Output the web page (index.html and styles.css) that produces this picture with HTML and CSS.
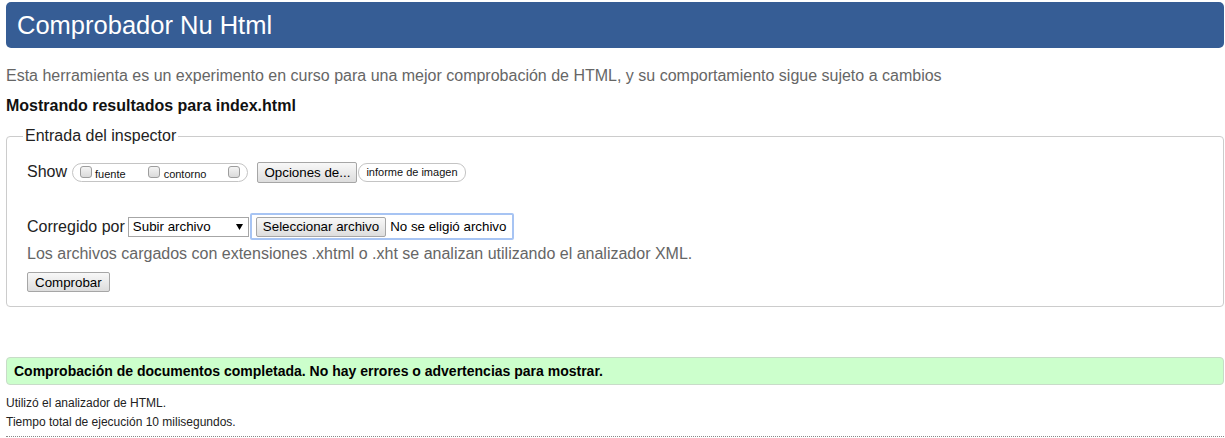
FILE: index.html
```html
<!DOCTYPE html>
<html lang="es">
<head>
<meta charset="utf-8">
<title>Comprobador Nu Html</title>
<link rel="stylesheet" href="styles.css">
</head>
<body>
<header class="banner"><h1 class="banner-title">Comprobador Nu Html</h1></header>
<p class="intro">Esta herramienta es un experimento en curso para una mejor comprobación de HTML, y su comportamiento sigue sujeto a cambios</p>
<h2 class="showing">Mostrando resultados para index.html</h2>
<fieldset class="inspector">
  <legend class="inspector-legend">Entrada del inspector</legend>
  <div class="row show-row">
    <span class="lbl">Show</span>
    <span class="group">
      <span class="opt"><span class="cb"></span><span class="opt-text">fuente</span></span>
      <span class="opt opt-wide"><span class="cb"></span><span class="opt-text">contorno</span></span>
      <span class="opt opt-last"><span class="cb"></span></span>
    </span>
    <span class="btn btn-options">Opciones de...</span>
    <span class="pill">informe de imagen</span>
  </div>
  <div class="row doc-row">
    <span class="lbl">Corregido por</span>
    <span class="select"><span class="select-text">Subir archivo</span><svg class="select-arrow" width="7" height="6" viewBox="0 0 7 6"><path d="M0 0H7L3.5 6Z" fill="#000"/></svg></span>
    <span class="filebox"><span class="btn">Seleccionar archivo</span><span class="file-text">No se eligió archivo</span></span>
  </div>
  <p class="hint">Los archivos cargados con extensiones .xhtml o .xht se analizan utilizando el analizador XML.</p>
  <span class="btn btn-submit">Comprobar</span>
</fieldset>
<div class="success">Comprobación de documentos completada. No hay errores o advertencias para mostrar.</div>
<p class="meta meta-first">Utilizó el analizador de HTML.</p>
<p class="meta">Tiempo total de ejecución 10 milisegundos.</p>
<div class="dotted"></div>
</body>
</html>
```
FILE: styles.css
```css
html, body {
  margin: 0;
  background: #fff;
}
body {
  padding: 2px 1px 0 6px;
  font-family: "Liberation Sans", Arial, sans-serif;
  color: #222;
}
.banner {
  background: #365d95;
  border-radius: 5px;
  height: 46px;
  padding-left: 11px;
}
.banner-title {
  margin: 0;
  font-weight: normal;
  font-size: 25.5px;
  line-height: 46px;
  color: #fff;
}
.intro {
  margin: 19px 0 0;
  font-size: 16px;
  line-height: 18px;
  color: #666;
}
.showing {
  margin: 12px 0 0;
  font-size: 16px;
  line-height: 18px;
  font-weight: bold;
  color: #111;
}
.inspector {
  margin: 12px 0 0;
  padding: 0 20px 14px 20px;
  border: 1px solid #ccc;
  border-radius: 4px;
  min-inline-size: 0;
}
.inspector-legend {
  padding: 0 2px;
  margin-left: -4px;
  font-size: 16px;
  line-height: 18px;
  color: #222;
}
.row {
  display: flex;
  align-items: center;
}
.show-row {
  margin-top: 17px;
  height: 20px;
}
.lbl {
  font-size: 16px;
  color: #222;
  margin-right: 5px;
}
.group {
  display: flex;
  align-items: center;
  box-sizing: border-box;
  height: 19px;
  padding: 0 7px;
  border: 1px solid #c4c4c4;
  border-radius: 10px;
}
.opt {
  display: flex;
  align-items: center;
  margin-right: 22px;
}
.opt-wide {
  margin-right: 22px;
}
.opt-last {
  margin-right: 0;
}
.opt-text {
  font-size: 11px;
  color: #111;
  margin-left: 3px;
  margin-top: 3px;
}
.opt-wide .opt-text {
  margin-left: 4px;
}
.cb {
  display: inline-block;
  box-sizing: border-box;
  width: 12px;
  height: 12px;
  border: 1px solid #9d9d9d;
  border-radius: 3px;
  background: linear-gradient(#f4f4f4, #dadada);
}
.btn {
  display: inline-flex;
  align-items: center;
  box-sizing: border-box;
  height: 20px;
  padding: 0 6px;
  border: 1px solid #a6a6a6;
  border-radius: 2px;
  background: linear-gradient(#f8f8f8, #dddddd);
  font-size: 13.33px;
  color: #000;
  white-space: nowrap;
}
.btn-options {
  margin-left: 9px;
  height: 21px;
}
.pill {
  display: inline-flex;
  align-items: center;
  box-sizing: border-box;
  height: 19px;
  margin-left: 1px;
  padding: 0 7px;
  border: 1px solid #c4c4c4;
  border-radius: 9px;
  font-size: 11px;
  color: #111;
}
.doc-row {
  margin-top: 31px;
  height: 27px;
}
.doc-row .lbl {
  margin-right: 3px;
}
.select {
  display: flex;
  align-items: center;
  justify-content: space-between;
  box-sizing: border-box;
  width: 121px;
  height: 20px;
  padding: 0 5px 0 4px;
  border: 1px solid #a6a6a6;
  background: #fff;
  font-size: 13.33px;
  color: #000;
}
.select-arrow {
  display: block;
}
.filebox {
  display: flex;
  align-items: center;
  gap: 4px;
  box-sizing: border-box;
  height: 27px;
  margin-left: 1px;
  padding: 0 6px 0 4px;
  border: 2px solid #a7c4f3;
  border-radius: 2px;
}
.file-text {
  font-size: 13.33px;
  color: #000;
}
.hint {
  margin: 5px 0 0;
  font-size: 16px;
  line-height: 18px;
  color: #666;
}
.btn-submit {
  margin-top: 9px;
  padding: 0 7px;
}
.success {
  margin-top: 50px;
  box-sizing: border-box;
  height: 28px;
  padding: 0 7px;
  border: 1px solid #c8dcc8;
  border-radius: 4px;
  background: #ccffcc;
  font-size: 14px;
  line-height: 26px;
  font-weight: bold;
  color: #000;
}
.meta {
  margin: 0;
  font-size: 12px;
  line-height: 19px;
  color: #222;
}
.meta-first {
  margin-top: 9px;
}
.dotted {
  margin-top: 4px;
  border-top: 1px dotted #888;
}
```
